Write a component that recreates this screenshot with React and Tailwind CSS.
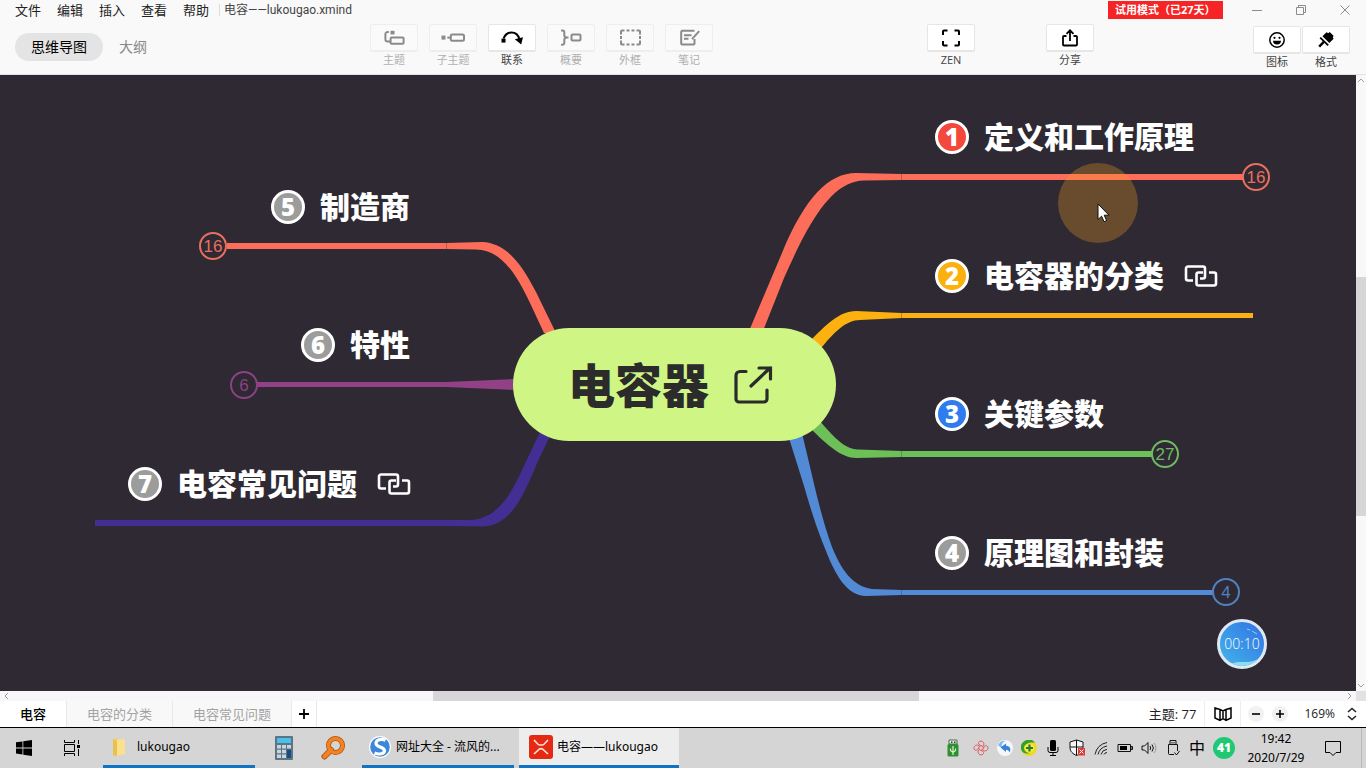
import { Fragment } from "react";
import clsx from "clsx";

const MENUS = ["文件", "编辑", "插入", "查看", "帮助"];

const SHEETS = [
  { name: "电容", active: true },
  { name: "电容的分类" },
  { name: "电容常见问题" },
];

// Topics live on a free canvas, so each one carries its own position.
const TOPICS = [
  { n: 1, title: "定义和工作原理", place: "left-[935px] top-[39px]", fill: "bg-[#f4483d]" },
  { n: 2, title: "电容器的分类", place: "left-[935px] top-[178px]", fill: "bg-[#fab00d]", link: true },
  { n: 3, title: "关键参数", place: "left-[935px] top-[316px]", fill: "bg-[#2f7cee]" },
  { n: 4, title: "原理图和封装", place: "left-[935px] top-[455px]", fill: "bg-[#9c9c9c]" },
  { n: 5, title: "制造商", place: "left-[271px] top-[109px]", fill: "bg-[#9c9c9c]" },
  { n: 6, title: "特性", place: "left-[301px] top-[247px]", fill: "bg-[#9c9c9c]" },
  { n: 7, title: "电容常见问题", place: "left-[128px] top-[386px]", fill: "bg-[#9c9c9c]", link: true },
];

const COUNTERS = [
  { id: "c1", count: 16, place: "left-[1242px] top-[88px]", tone: "border-[#e8705f] text-[#e8705f]" },
  { id: "c3", count: 27, place: "left-[1151px] top-[365px]", tone: "border-[#70b963] text-[#70b963]" },
  { id: "c4", count: 4, place: "left-[1212px] top-[503px]", tone: "border-[#5280c4] text-[#5280c4]" },
  { id: "c5", count: 16, place: "left-[199px] top-[157px]", tone: "border-[#e8705f] text-[#e8705f]" },
  { id: "c6", count: 6, place: "left-[230px] top-[296px]", tone: "border-[#8c4185] text-[#8c4185]" },
];

const BRANCHES = [
  {
    color: "#fd6e5a",
    curve: "M749 256L782 178C805 122 829 98 856 98L902 99V105L864 105.500C840 106 822 128 804 161C797 174 790 190 784 203L763 256Z",
    line: "M902 99H1243V105H902Z",
    seam: 901,
    y: 102,
  },
  {
    color: "#fcb110",
    curve: "M808 268C826 250 839 236 856 236L902 238V243L860 245C846 245 834 257 818 277Z",
    line: "M902 238H1253V243H902Z",
    seam: 901,
    y: 240,
  },
  {
    color: "#6cc057",
    curve: "M818 344C834 362 844 374 858 374.500L902 376V382L856 383C842 383 828 371 808 351Z",
    line: "M902 376H1152V382H902Z",
    seam: 901,
    y: 379,
  },
  {
    color: "#538ad6",
    curve: "M788 360L804 411C812 439 818 456 824 471C835 500 847 521 866 521L902 520V515L872 514C852 511 841 494 832 472C826 456 820 434 815 413L802 358Z",
    line: "M902 515H1213V520H902Z",
    seam: 901,
    y: 517,
  },
  {
    color: "#fd6e5a",
    curve: "M446 168L482 167C507 168 522 190 536 217L556 258H544L530 228C515 196 500 175 476 174.500L446 174Z",
    line: "M227 168H446V174H227Z",
    seam: 446,
    y: 171,
  },
  {
    color: "#934186",
    curve: "M446 307L516 304V315L446 312Z",
    line: "M257 307H446V312H257Z",
  },
  {
    color: "#432e94",
    curve: "M446 445H470C494 444 508 426 522 395L540 357H552L538 386C523 422 511 451 482 451.500L446 451Z",
    line: "M95 445H446V451H95Z",
  },
];

/* ---------- icons ---------- */

function Icon({ w, h, children, className, sw = 2 }) {
  return (
    <svg
      width={w}
      height={h}
      viewBox={`0 0 ${w} ${h}`}
      fill="none"
      stroke="currentColor"
      strokeWidth={sw}
      className={clsx("shrink-0", className)}
      aria-hidden="true"
    >
      {children}
    </svg>
  );
}

const TOOLS = [
  {
    label: "主题",
    art: (
      <>
        <path d="M8.500 1.800h4v3.600h-4z" fill="currentColor" stroke="none" />
        <path d="M6.800 3H5.600a2.200 2.200 0 0 0-2.200 2.200v5a2.200 2.200 0 0 0 2.200 2.200H8" />
        <rect x="8.600" y="8.600" width="13" height="6.200" rx="1" />
      </>
    ),
  },
  {
    label: "子主题",
    art: (
      <>
        <path d="M.500 6.600h4v4h-4z" fill="currentColor" stroke="none" />
        <path d="M6.300 8.600H10" />
        <rect x="9.800" y="5.400" width="13.200" height="6.400" rx="1.500" />
      </>
    ),
  },
  {
    label: "联系",
    enabled: true,
    art: (
      <>
        <path d="M1.500 9.600h4v4h-4z" fill="currentColor" stroke="none" />
        <path d="M3.600 9.500C5 5.500 8 3.500 11.500 3.500c4 0 6.800 2.500 7.800 6.500" />
        <path d="M14.800 10.300l8.200-2-1.800 7.200z" fill="currentColor" stroke="none" />
      </>
    ),
  },
  {
    label: "概要",
    art: (
      <>
        <path d="M2 1.500h1.500a1.800 1.800 0 0 1 1.800 1.800v3q0 2 2.500 2.300q-2.500.300-2.500 2.300v3a1.800 1.800 0 0 1-1.800 1.800H2M7 8.600h2.500" />
        <rect x="12.500" y="5.600" width="9" height="6" rx="1" />
      </>
    ),
  },
  {
    label: "外框",
    art: <path d="M3 5.500V2.500a1 1 0 0 1 1-1h2.500M8.500 1.500h3M13.500 1.500h3M18.500 1.500H21a1 1 0 0 1 1 1v3M22 7v3M22 11.500v3a1 1 0 0 1-1 1h-2.500M16.500 15.500h-3M11.500 15.500h-3M6.500 15.500H4a1 1 0 0 1-1-1v-3M3 10V7" />,
  },
  {
    label: "笔记",
    art: <path d="M17.500 1.800H5.200a1 1 0 0 0-1 1v11.800a1 1 0 0 0 1 1h11.300a1 1 0 0 0 1-1V10M7 6.200h7.500M7 9.800h4.500M15 10.200l7.200-8" />,
  },
];

function ZenIcon() {
  return (
    <Icon w={20} h={18}>
      <path d="M2 6V2.500a1 1 0 0 1 1-1h3.500M13.500 1.500H17a1 1 0 0 1 1 1V6M18 12v3.500a1 1 0 0 1-1 1h-3.500M6.500 16.500H3a1 1 0 0 1-1-1V12" />
    </Icon>
  );
}

function ShareIcon() {
  return (
    <Icon w={18} h={20}>
      <path d="M5.500 8H3a1 1 0 0 0-1 1v7.500a1 1 0 0 0 1 1h12a1 1 0 0 0 1-1V9a1 1 0 0 0-1-1h-2.500M9 13V2.500M5.500 5.800L9 2.300l3.500 3.500" strokeWidth="1.800" />
    </Icon>
  );
}

function SmileIcon() {
  return (
    <Icon w={18} h={18}>
      <circle cx="9" cy="9" r="7.200" strokeWidth="1.500" />
      <circle cx="6.500" cy="6.800" r="1.100" fill="currentColor" stroke="none" />
      <circle cx="11.500" cy="6.800" r="1.100" fill="currentColor" stroke="none" />
      <path d="M5 9.800h8a4 3.600 0 0 1-8 0z" fill="currentColor" stroke="none" />
    </Icon>
  );
}

function BrushIcon() {
  return (
    <Icon w={18} h={18}>
      <path d="M9.500 1.200l1.800 1 1.400-1.200 4 4-1 1.200.900 1.600-4.300 4.200-6.800-6.800z" fill="currentColor" stroke="none" />
      <path d="M3.200 6.600l8 7.800" strokeWidth="1.800" />
      <path d="M6.800 10.800l-4.600 4.800" strokeWidth="2.400" />
    </Icon>
  );
}

function LinkIcon() {
  return (
    <Icon w={34} h={24} className="ml-5 text-white">
      <path
        d="M9 16.500H4a2 2 0 0 1-2-2V4.500a2 2 0 0 1 2-2h15a2 2 0 0 1 2 2v8a2 2 0 0 1-2 2h-3M19 8.500h-4.500a2 2 0 0 0-2 2v9a2 2 0 0 0 2 2H30a2 2 0 0 0 2-2V10.500a2 2 0 0 0-2-2h-5"
        strokeWidth="2.600"
      />
    </Icon>
  );
}

/* ---------- header ---------- */

function ToolButton({ label, enabled = true, children }) {
  return (
    <button
      type="button"
      className={clsx("flex w-12 flex-col items-center", enabled ? "text-black" : "text-[#8a8a8a]")}
    >
      <span
        className={clsx(
          "flex h-7 w-full items-center justify-center rounded-xs border border-b-2",
          enabled ? "border-[#e6e6e6] bg-white" : "border-[#eeeeee] bg-[#fafafa]"
        )}
      >
        {children}
      </span>
      <span
        className={clsx(
          "text-[11px] leading-4 whitespace-nowrap",
          enabled ? "text-[#444444]" : "text-[#b0b0b0]"
        )}
      >
        {label}
      </span>
    </button>
  );
}

function Header() {
  return (
    <header className="shrink-0 border-b border-[#e2e0e4] bg-[#f9f9f9]">
      <div className="flex h-5 items-center pl-[15px]">
        <nav className="flex gap-4 text-[13px] leading-5 text-[#222222]">
          {MENUS.map((menu) => (
            <button key={menu} type="button">
              {menu}
            </button>
          ))}
        </nav>
        <span className="ml-[10px] h-3 w-px bg-[#dddddd]" />
        <span className="ml-1 font-['Roboto','Noto_Sans_CJK_SC',sans-serif] text-xs leading-5 text-[#444444]">
          电容——lukougao.xmind
        </span>
        <span className="ml-auto h-[18px] w-[115px] bg-[#f62424] pl-[7px] text-[11px] leading-[18px] font-bold whitespace-nowrap text-white">
          试用模式（已27天）
        </span>
        <div className="ml-[28px] flex w-[115px] items-center justify-between pr-[15px] text-[#8c8c8c]">
          <button type="button" aria-label="最小化">
            <Icon w={12} h={12} sw={1}>
              <path d="M1 6.500h10" />
            </Icon>
          </button>
          <button type="button" aria-label="还原">
            <Icon w={12} h={12} sw={1}>
              <path d="M1.500 3.500h7v7h-7zM3.500 3V1.500h7v7H9" />
            </Icon>
          </button>
          <button type="button" aria-label="关闭">
            <Icon w={12} h={12} sw={1}>
              <path d="M1.500 1.500l9 9M10.500 1.500l-9 9" />
            </Icon>
          </button>
        </div>
      </div>

      <div className="flex h-[54px] items-start pt-1">
        <div className="flex w-[370px] shrink-0 items-center gap-4 pt-[9px] pl-[15px] text-sm">
          <button type="button" className="h-7 w-[88px] rounded-full bg-[#e4e4e4] text-black">
            思维导图
          </button>
          <button type="button" className="text-[#888888]">
            大纲
          </button>
        </div>
        <div className="flex gap-[11px]">
          {TOOLS.map((tool) => (
            <ToolButton key={tool.label} label={tool.label} enabled={Boolean(tool.enabled)}>
              <Icon w={24} h={18}>
                {tool.art}
              </Icon>
            </ToolButton>
          ))}
        </div>
        <div className="ml-auto flex gap-[71px]">
          <ToolButton label="ZEN">
            <ZenIcon />
          </ToolButton>
          <ToolButton label="分享">
            <ShareIcon />
          </ToolButton>
        </div>
        <div className="mt-0.5 mr-4 ml-[159px] flex gap-px">
          <ToolButton label="图标">
            <SmileIcon />
          </ToolButton>
          <ToolButton label="格式">
            <BrushIcon />
          </ToolButton>
        </div>
      </div>
    </header>
  );
}

/* ---------- mind map ---------- */

function Topic({ topic }) {
  return (
    <div className={clsx("absolute flex h-[46px] items-center whitespace-nowrap", topic.place)}>
      <span
        className={clsx(
          "mr-[15px] flex size-[34px] shrink-0 items-center justify-center rounded-full border-3 border-white text-2xl leading-none font-extrabold text-white",
          topic.fill
        )}
      >
        {topic.n}
      </span>
      <span className="text-[30px] leading-[46px] font-black text-white">{topic.title}</span>
      {topic.link && <LinkIcon />}
    </div>
  );
}

function Connectors() {
  return (
    <svg className="absolute inset-0 size-full" aria-hidden="true">
      {BRANCHES.map((b) => (
        <Fragment key={b.curve}>
          <path d={b.curve} fill={b.color} />
          <path d={b.line} fill={b.color} />
          {b.seam && <path d={`M${b.seam}.5 ${b.y - 3}v6`} stroke="#2e2932" strokeOpacity="0.3" />}
        </Fragment>
      ))}
    </svg>
  );
}

function MindMap() {
  return (
    <main className="relative min-h-[616px] min-w-0 flex-1 overflow-hidden bg-[#2e2932]">
      <Connectors />

      <div className="absolute top-[253px] left-[513px] flex h-[113px] w-[323px] items-center rounded-full bg-[#cff584] pl-[55px] text-[#2b2b2b]">
        <span className="text-[47px] leading-[70px] font-black">电容器</span>
        <Icon w={40} h={40} className="ml-6">
          <path
            d="M13 6.500H7a4 4 0 0 0-4 4V34a3 3 0 0 0 3 3h25a3 3 0 0 0 3-3v-9M18 21L37 3M26 3h11.500V14"
            strokeWidth="3.200"
            strokeLinecap="round"
          />
        </Icon>
      </div>

      {TOPICS.map((topic) => (
        <Topic key={topic.n} topic={topic} />
      ))}

      {COUNTERS.map((c) => (
        <button
          key={c.id}
          type="button"
          className={clsx(
            "absolute flex size-7 items-center justify-center rounded-full border-2 bg-[#2e2932] font-['Liberation_Sans',sans-serif] text-[17px] leading-none",
            c.place,
            c.tone
          )}
        >
          {c.count}
        </button>
      ))}

      {/* click highlight and pointer */}
      <div className="absolute top-[88px] left-[1058px] size-20 rounded-full bg-[rgb(242,160,40)]/30" />
      <svg width="14" height="20" viewBox="0 0 14 20" className="absolute top-[128px] left-[1097px]" aria-hidden="true">
        <path d="M1 1v15.500l3.600-3.300 2.500 5.500 2.500-1.200-2.400-5.300H12z" fill="#fff" stroke="#111" />
      </svg>

      {/* recording timer */}
      <div className="absolute top-[544px] left-[1217px] flex size-[50px] items-center justify-center overflow-hidden rounded-full border-3 border-[#dfe9f4] bg-linear-to-tr from-[#46b4ea] to-[#3272e2] text-sm font-light text-white">
        <svg className="absolute inset-0" width="44" height="44" viewBox="0 0 44 44" fill="none" aria-hidden="true">
          <path d="M8 43C18 37 28 43 38 37V44H8z" fill="#8edcf0" />
          <path d="M27 7l3 1M32 9l5 3" stroke="#9cc8f8" />
        </svg>
        <span className="relative">00:10</span>
      </div>
    </main>
  );
}

function Chevron({ d }) {
  return (
    <Icon w={10} h={10} sw={1} className="text-[#a0a0a0]">
      <path d={d} />
    </Icon>
  );
}

function VerticalScrollbar() {
  return (
    <div className="flex w-[10px] shrink-0 flex-col bg-[#f8f8f9]">
      <Chevron d="M2 7l3-3 3 3" />
      <div className="grow-[192]" />
      <div className="grow-[239] bg-[#d6d6d7]" />
      <div className="grow-[165]" />
      <Chevron d="M2 3l3 3 3-3" />
    </div>
  );
}

function HorizontalScrollbar() {
  return (
    <div className="flex h-[10px] shrink-0 bg-[#f8f6f9]">
      <div className="flex flex-1">
        <Chevron d="M8 2L5 5l3 3" />
        <div className="grow-[423]" />
        <div className="grow-[486] bg-[#d8d5d9]" />
        <div className="grow-[427]" />
        <Chevron d="M2 2l3 3-3 3" />
      </div>
      <div className="w-[10px] bg-[#e2e2e2]" />
    </div>
  );
}

/* ---------- sheet bar ---------- */

function SheetBar() {
  return (
    <div className="flex h-[26px] shrink-0 items-stretch bg-white text-[13px] leading-[26px]">
      {SHEETS.map((sheet) => (
        <button
          key={sheet.name}
          type="button"
          className={clsx(
            "border-r border-[#e8e8e8] px-5",
            sheet.active ? "bg-white font-medium text-black" : "bg-[#f8f8f8] text-[#a3a3a3]"
          )}
        >
          {sheet.name}
        </button>
      ))}
      <button
        type="button"
        aria-label="新建画布"
        className="flex w-[25px] items-center justify-center border-r border-[#e8e8e8]"
      >
        <Icon w={12} h={12}>
          <path d="M6 1v10M1 6h10" strokeWidth="1.800" />
        </Icon>
      </button>

      <span className="ml-auto text-[#222222]">主题: 77</span>
      <div className="ml-2 flex w-[37px] items-center justify-center border-x border-[#eeeeee]">
        <button type="button" aria-label="导航">
          <Icon w={18} h={16}>
            <path d="M1 2l5 1.500L9 5l3-1.500L17 2v10l-5 2.500L9 12.500 6 14.500 1 12zM6 3.500v11M12 3.500v11M9 5v7.500" strokeWidth="1.500" />
          </Icon>
        </button>
      </div>
      <div className="flex items-center gap-2 pl-[7px]">
        <button type="button" aria-label="缩小" className="flex size-4 items-center justify-center rounded-full bg-[#f1f1f1]">
          <Icon w={10} h={10}>
            <path d="M1 5h8" strokeWidth="1.600" />
          </Icon>
        </button>
        <button type="button" aria-label="放大" className="flex size-4 items-center justify-center rounded-full bg-[#f1f1f1]">
          <Icon w={10} h={10}>
            <path d="M1 5h8M5 1v8" strokeWidth="1.600" />
          </Icon>
        </button>
      </div>
      <button type="button" className="mr-2 ml-4 flex items-center gap-[11px] text-xs text-[#222222]">
        169%
        <Icon w={12} h={14}>
          <path d="M2 5l4-3.500L10 5M2 9l4 3.500L10 9" strokeWidth="1.500" />
        </Icon>
      </button>
    </div>
  );
}

/* ---------- taskbar ---------- */

function SogouIcon() {
  return (
    <svg width="22" height="22" viewBox="0 0 22 22" className="shrink-0" aria-hidden="true">
      <circle cx="11" cy="11" r="11" fill="#fff" />
      <circle cx="11" cy="11" r="9.800" fill="#3d87db" />
      <path
        d="M16.500 4.300C12 2.300 7 4 7 7.500c0 4 8.500 3 8.500 7.300 0 3-5.500 4.200-10 2.200"
        fill="none"
        stroke="#fff"
        strokeWidth="3.200"
      />
    </svg>
  );
}

function XmindIcon() {
  return (
    <svg width="24" height="24" viewBox="0 0 24 24" className="shrink-0" aria-hidden="true">
      <rect width="24" height="24" rx="3" fill="#e42a12" />
      <path d="M5 5l4 4.200q.800.800 2 .800h2q1.200 0 2-.800L19 5M5 19l5.300-4.800q1.700-1.200 3.400 0L19 19" fill="none" stroke="#ffe3dc" strokeWidth="1.600" />
    </svg>
  );
}

function FolderIcon() {
  return (
    <svg width="16" height="20" viewBox="0 0 16 20" className="shrink-0" aria-hidden="true">
      <path d="M2 2l5-1v17l-5 1z" fill="#f5cf63" />
      <path d="M5 3l8-1 1 2v13l-9 2z" fill="#fbe08d" />
      <path d="M2 2l4 2v15l-4-1z" fill="#ecc04f" />
    </svg>
  );
}

function CalculatorIcon() {
  return (
    <svg width="18" height="24" viewBox="0 0 18 24" aria-hidden="true">
      <rect width="18" height="24" rx="1" fill="#5d7486" />
      <rect x="2" y="2" width="14" height="5" fill="#49c2e8" />
      <path
        d="M2 9h4v3.500H2zM7 9h4v3.500H7zM12 9h4v3.500h-4zM2 13.700h4v3.500H2zM7 13.700h4v3.500H7zM2 18.400h4V22H2zM7 18.400h4V22H7z"
        fill="#c9d5dd"
      />
      <path d="M12 13.700h4V22h-4z" fill="#1b4a80" />
    </svg>
  );
}

function SearchIcon() {
  return (
    <svg width="24" height="24" viewBox="0 0 24 24" fill="none" aria-hidden="true">
      <path d="M3.500 20.500L10 14" stroke="#a4501a" strokeWidth="6" strokeLinecap="round" />
      <circle cx="14.500" cy="9.500" r="7" stroke="#a4501a" strokeWidth="5" />
      <path d="M3.500 20.500L10 14" stroke="#f5821f" strokeWidth="4.200" strokeLinecap="round" />
      <circle cx="14.500" cy="9.500" r="7" stroke="#f5821f" strokeWidth="3.600" />
    </svg>
  );
}

const TRAY = [
  {
    name: "安全删除硬件",
    art: (
      <svg width="14" height="18" viewBox="0 0 14 18">
        <path d="M3 1h8v4H3z" fill="#e8ede8" stroke="#4d6a4d" />
        <path d="M5 2.500h1.500V4H5zM8 2.500h1.500V4H8z" fill="#333" />
        <rect x="1.500" y="5" width="11" height="12.500" rx="1.500" fill="#2f8f2f" />
        <path d="M7 7v9M4.500 9.500v2L7 13.500l2.500-2v-2" fill="none" stroke="#d6f2d0" strokeWidth="1.200" />
      </svg>
    ),
  },
  {
    name: "云服务",
    art: (
      <svg width="16" height="16" viewBox="0 0 16 16" fill="none" stroke="#e2555c">
        <path d="M8 5.500C5 5 4.500 2 7 1.200c3-.700 5 2.300 3.300 4.800M10.500 8C11.500 5 14.500 5 15 7.500c.300 3-3 4.500-5.200 2.500M8 10.500c3 .500 3.500 3.500 1 4.300-3 .700-5-2.300-3.300-4.800M5.500 8C4.500 11 1.500 11 1 8.500.700 5.500 4 4 6.200 6" />
        <circle cx="8" cy="8" r="2.300" />
      </svg>
    ),
  },
  {
    name: "浏览器",
    art: (
      <svg width="16" height="16" viewBox="0 0 16 16">
        <circle cx="8" cy="8" r="8" fill="#f2f7fc" />
        <path d="M1 5.500A7.500 7.500 0 0 1 9 .800C5 2 4 5 5.500 8z" fill="#7db7ee" />
        <path d="M3.500 7.500L9 3.500v2.300c4 .200 5.500 3.500 3.500 6.700-.500-2-1.500-2.800-3.500-2.800V12z" fill="#3b7fd6" />
      </svg>
    ),
  },
  {
    name: "安全卫士",
    art: (
      <svg width="16" height="16" viewBox="0 0 16 16">
        <circle cx="8" cy="8" r="8" fill="#f0d828" />
        <path d="M0 9A8 8 0 0 1 14 2.500C8 2 3 4 3 8c0 3 3 5 6 5-4 1.500-8 0-9-4z" fill="#36a02c" />
        <circle cx="8.500" cy="8" r="4.600" fill="#f4ea4a" />
        <path d="M8.500 4.500v7M5 8h7" stroke="#23802a" strokeWidth="2.200" />
      </svg>
    ),
  },
  {
    name: "麦克风",
    art: (
      <svg width="14" height="18" viewBox="0 0 14 18">
        <rect x="4" y="1" width="6" height="11" rx="1.500" />
        <path d="M2 8v3.500q0 2 2 2h6q2 0 2-2V8M7 13.500V16M4 16.500h6" fill="none" stroke="#000" />
      </svg>
    ),
  },
  {
    name: "防护",
    art: (
      <svg width="18" height="18" viewBox="0 0 18 18">
        <path d="M8.500 1L15 3v5.500c0 4-3 6.500-6.500 8C5 15 2 12.500 2 8.500V3z" fill="#f5f5f5" stroke="#111" />
        <path d="M8.500 1v15.500M2 8h13" stroke="#111" />
        <path d="M10 9h7v7.500h-7z" fill="#dd3a3a" />
        <path d="M11.500 10.500l4 4M15.500 10.500l-4 4" stroke="#fff" />
      </svg>
    ),
  },
  {
    name: "无线网络",
    art: (
      <svg width="16" height="16" viewBox="0 0 16 16" fill="none" stroke="#222">
        <path d="M2 14.500Q4 4.500 14 2.500M5 14.500Q6.500 7.500 14 6M8 14.500Q9 10 14 9.300M11 14.500Q11.500 12.800 14 12.500" />
      </svg>
    ),
  },
  {
    name: "电池",
    art: (
      <svg width="16" height="10" viewBox="0 0 16 10">
        <path d="M1 1.500h12.500v7H1zM14 3.500h1.500v3H14z" fill="none" stroke="#111" />
        <path d="M3 3h7v4H3z" />
      </svg>
    ),
  },
  {
    name: "音量",
    art: (
      <svg width="16" height="14" viewBox="0 0 16 14" fill="none" stroke="#111">
        <path d="M1 5h2.500L7 1.500v11L3.500 9H1zM9 5q1.500 2 0 4M11 3.500q2.800 3.500 0 7" />
        <path d="M13 2q4 5 0 10" stroke="#999" />
      </svg>
    ),
  },
  {
    name: "USB",
    art: (
      <svg width="14" height="18" viewBox="0 0 14 18" fill="none" stroke="#111">
        <path d="M4 5.500V1.500h6v4M2.500 5.500h9V12M2.500 5.500v9q0 1 1 1H8M6 3v1.500M8 3v1.500M8.500 13.500l2 2.500 3-4" />
      </svg>
    ),
  },
];

function TaskItem({ icon, children, active, className }) {
  return (
    <button
      type="button"
      className={clsx(
        "flex h-full items-center border-b-3 border-[#0f74c4] font-['Noto_Sans','Noto_Sans_CJK_SC',sans-serif] text-xs whitespace-nowrap text-black",
        active && "bg-[#ededed]",
        className
      )}
    >
      {icon}
      {children}
    </button>
  );
}

function Taskbar() {
  return (
    <footer className="flex h-[41px] shrink-0 items-stretch border-t border-black bg-[#d5d5d5]">
      <button type="button" aria-label="开始" className="flex w-12 items-center justify-center">
        <svg width="16" height="16" viewBox="0 0 16 16" aria-hidden="true">
          <path d="M0 2.300l6.500-.900v6.100H0zM7.300 1.300L16 0v7.500H7.300zM0 8.400h6.500v6.100L0 13.600zM7.300 8.400H16V16l-8.700-1.300z" />
        </svg>
      </button>
      <button type="button" aria-label="任务视图" className="flex w-12 items-center justify-center">
        <Icon w={18} h={16} sw={1}>
          <path d="M1.500 0v2.500h10V0M1.500 4.500h10v7h-10zM1.500 16v-2.500h10V16M15.500 0v4M15.500 9v7" />
          <path d="M14 5h3v3h-3z" fill="currentColor" stroke="none" />
        </Icon>
      </button>
      <TaskItem icon={<FolderIcon />} className="ml-[7px] w-[152px] gap-[10px] pl-2">
        lukougao
      </TaskItem>
      <button type="button" aria-label="计算器" className="ml-[5px] flex w-12 items-center justify-center">
        <CalculatorIcon />
      </button>
      <button type="button" aria-label="搜索" className="flex w-[50px] items-center justify-center">
        <SearchIcon />
      </button>
      <TaskItem icon={<SogouIcon />} className="ml-1 w-[152px] gap-[5px] pl-[7px]">
        网址大全 - 流风的...
      </TaskItem>
      <TaskItem icon={<XmindIcon />} active className="ml-[5px] w-[160px] gap-1 pl-[10px]">
        电容——lukougao
      </TaskItem>

      <div className="ml-auto flex items-center">
        {TRAY.map((item, i) => (
          <button
            key={item.name}
            type="button"
            aria-label={item.name}
            className={clsx("flex w-6 items-center justify-center", i === 0 && "mr-1")}
          >
            {item.art}
          </button>
        ))}
        <button type="button" className="w-6 text-center text-base leading-6 text-black">
          中
        </button>
        <span className="ml-1 flex size-[22px] items-center justify-center rounded-full bg-[#1fc872] text-xs font-extrabold text-white">
          41
        </span>
        <div className="ml-2 flex w-[66px] flex-col items-center font-['Noto_Sans',sans-serif] text-xs leading-[19px] text-black">
          <span>19:42</span>
          <span>2020/7/29</span>
        </div>
        <button type="button" aria-label="通知" className="ml-[7px] flex w-[34px] justify-center">
          <Icon w={18} h={18} sw={1}>
            <path d="M1.500 2.500h15v11h-4.500l-3 3-3-3H1.500z" />
          </Icon>
        </button>
        <span className="mr-1 ml-[11px] h-10 w-px bg-[#b8b8b8]" />
      </div>
    </footer>
  );
}

export default function App() {
  return (
    <div className="flex min-h-screen flex-col bg-white font-['Open_Sans','Noto_Sans_CJK_SC',sans-serif]">
      <Header />
      <div className="flex flex-1">
        <MindMap />
        <VerticalScrollbar />
      </div>
      <HorizontalScrollbar />
      <SheetBar />
      <Taskbar />
    </div>
  );
}
